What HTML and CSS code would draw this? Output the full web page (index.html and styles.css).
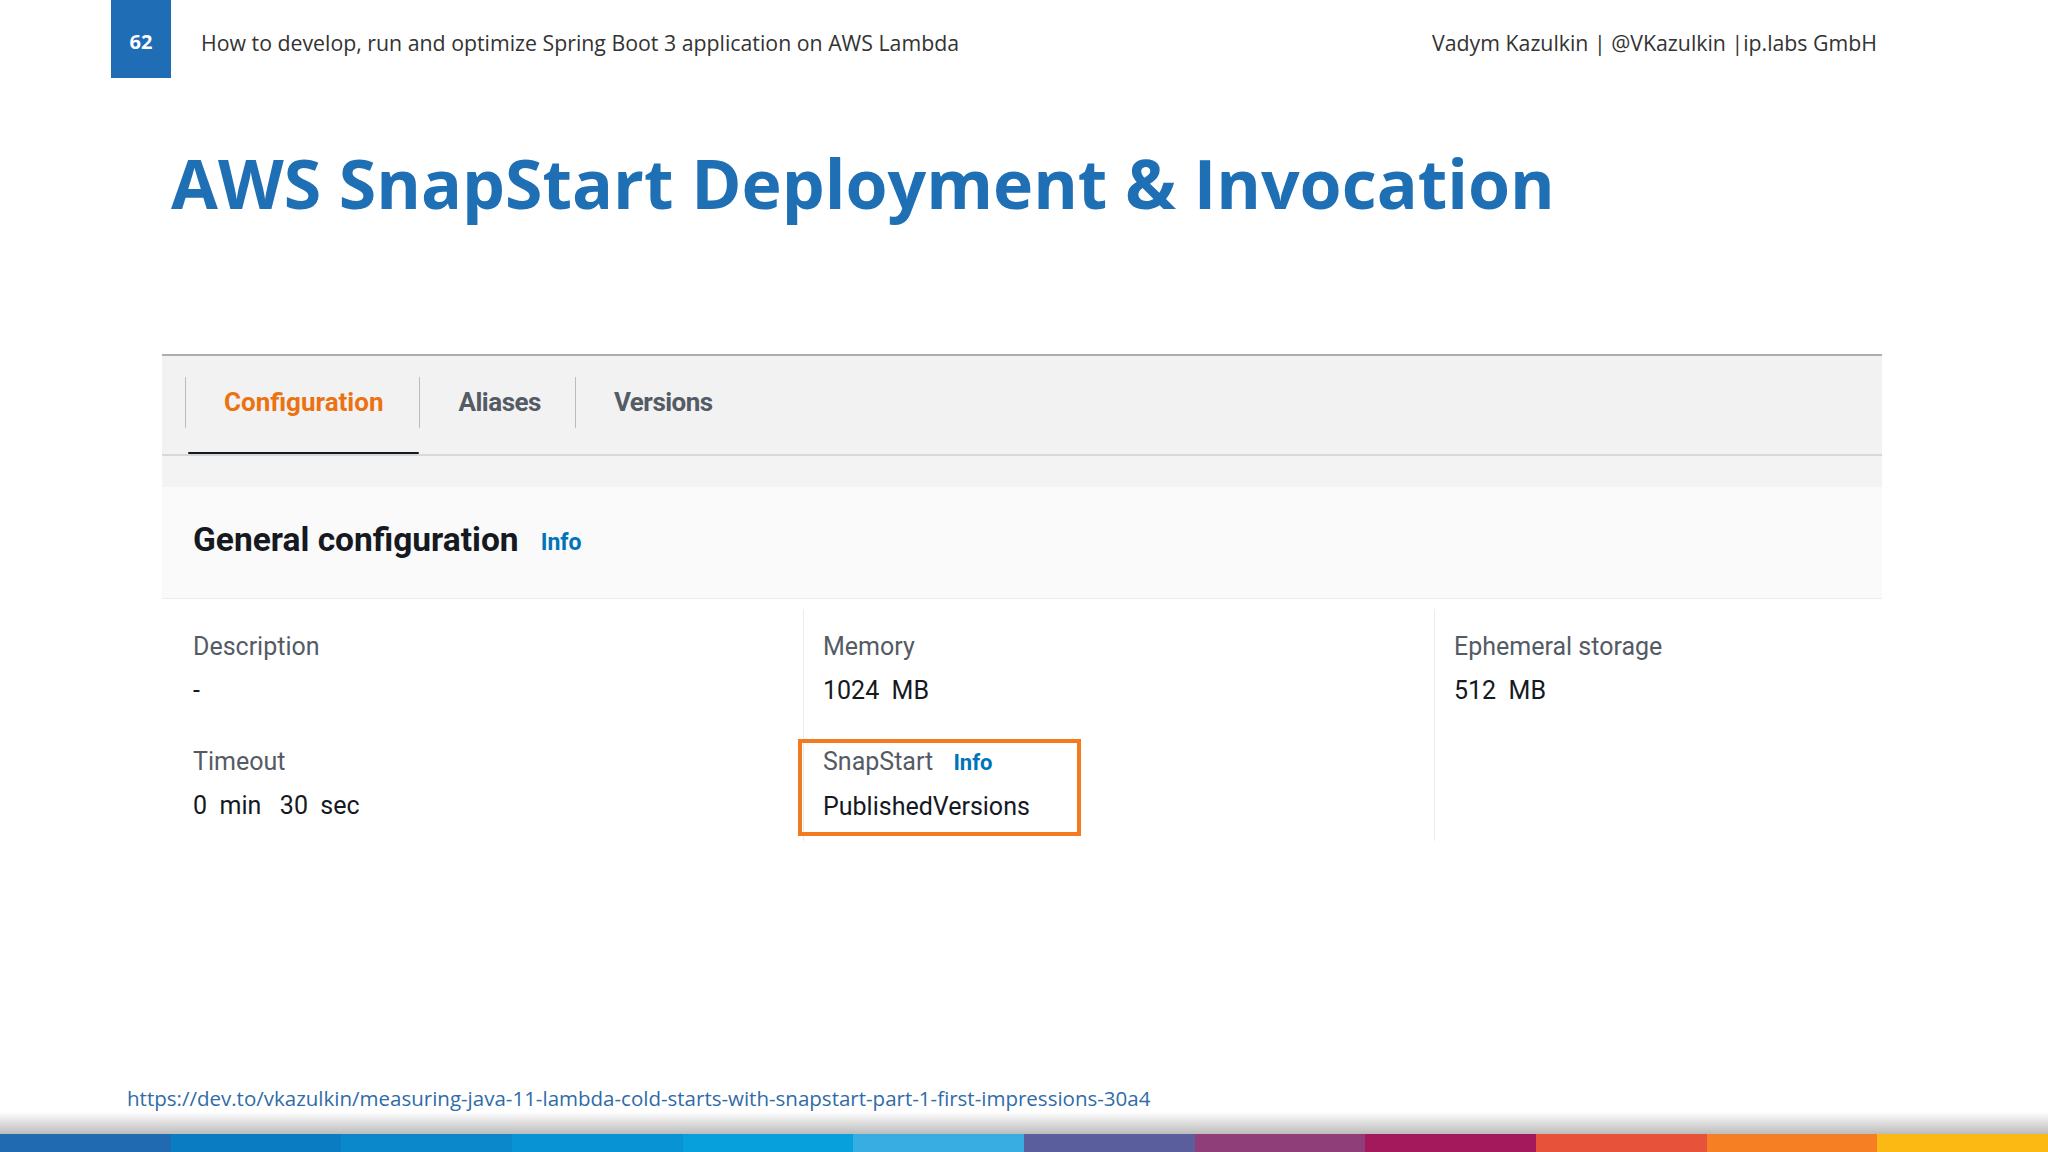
FILE: index.html
```html
<!DOCTYPE html>
<html lang="en">

<head>
    <meta charset="UTF-8">
    <title>AWS SnapStart Deployment &amp; Invocation</title>
    <link rel="stylesheet" href="styles.css">
</head>

<body>

    <div class="slide-header">
        <div class="slide-num">62</div>
        <div class="slide-topic">How to develop, run and optimize Spring Boot 3 application on AWS Lambda</div>
        <div class="slide-author">Vadym Kazulkin | @VKazulkin |ip.labs GmbH</div>
    </div>

    <h1 class="slide-title">AWS SnapStart Deployment &amp; Invocation</h1>

    <div class="console">

        <div class="tabbar">
            <div class="tab active"><span class="tab-label">Configuration</span></div>
            <div class="tab"><span class="tab-label">Aliases</span></div>
            <div class="tab"><span class="tab-label">Versions</span></div>
        </div>

        <div class="tab-gap"></div>

        <div class="section-head">
            <h2>General configuration</h2>
            <a class="info">Info</a>
        </div>

        <div class="section-body">
            <div class="col first">
                <div class="field">
                    <div class="label">Description</div>
                    <div class="value">-</div>
                </div>
                <div class="field next">
                    <div class="label">Timeout</div>
                    <div class="value">0&nbsp; min &nbsp; 30&nbsp; sec</div>
                </div>
            </div>
            <div class="col">
                <div class="field">
                    <div class="label">Memory</div>
                    <div class="value">1024&nbsp; MB</div>
                </div>
                <div class="field next marked">
                    <div class="label">SnapStart <a class="info small">Info</a></div>
                    <div class="value">PublishedVersions</div>
                </div>
            </div>
            <div class="col">
                <div class="field">
                    <div class="label">Ephemeral storage</div>
                    <div class="value">512&nbsp; MB</div>
                </div>
            </div>
        </div>

    </div>

    <div class="slide-footer">
        <div class="source">https://dev.to/vkazulkin/measuring-java-11-lambda-cold-starts-with-snapstart-part-1-first-impressions-30a4</div>
        <div class="shadow"></div>
        <div class="colorbar">
            <span class="c1"></span><span class="c2"></span><span class="c3"></span><span class="c4"></span>
            <span class="c5"></span><span class="c6"></span><span class="c7"></span><span class="c8"></span>
            <span class="c9"></span><span class="c10"></span><span class="c11"></span><span class="c12"></span>
        </div>
    </div>

</body>

</html>
```

FILE: styles.css
```css
body {
    margin: 0px;
    width: 2048px;
    height: 1152px;
    background: #ffffff;
    font-family: "Open Sans", Arial, sans-serif;
    display: flex;
    flex-direction: column;
    overflow: hidden;
}

/* slide header */
.slide-header {
    display: flex;
    align-items: center;
    height: 78px;
    padding-left: 111px;
    padding-right: 171px;
}

.slide-num {
    width: 60px;
    height: 78px;
    background: #1f6db5;
    color: white;
    font-weight: bold;
    font-size: 20px;
    display: flex;
    align-items: center;
    justify-content: center;
    padding-top: 4px;
    box-sizing: border-box;
}

.slide-topic {
    margin-left: 30px;
    font-size: 21.3px;
    color: #333333;
    padding-top: 6px;
}

.slide-author {
    margin-left: auto;
    font-size: 21.3px;
    color: #333333;
    padding-top: 6px;
}

.slide-title {
    margin: 66px 0px 0px 171px;
    font-size: 68px;
    line-height: 78px;
    font-weight: bold;
    color: #1f6fb5;
}

/* the console screenshot */
.console {
    margin: 132px 0px 0px 162px;
    width: 1720px;
    font-family: Roboto, "Open Sans", sans-serif;
}

.tabbar {
    display: flex;
    height: 102px;
    box-sizing: border-box;
    background: #f2f2f2;
    border-top: 2px solid #a9afb1;
    border-bottom: 2px solid #d6d9da;
    padding: 21px 0px 0px 23px;
}

.tab {
    display: flex;
    flex-direction: column;
}

.tab-label {
    border-left: 1px solid #b9bdbf;
    height: 51px;
    line-height: 51px;
    padding: 0px 36px 0px 38px;
    font-size: 26px;
    font-weight: bold;
    color: #545b64;
}

.tab + .tab .tab-label {
    letter-spacing: -0.5px;
    padding-right: 34px;
}

.tab.active .tab-label {
    color: #ec7211;
}

.tab.active::after {
    content: "";
    height: 5px;
    margin: 24px 0px 0px 3px;
    background: #16191f;
    border-radius: 2px;
}

.tab-gap {
    height: 31px;
    background: #f3f3f3;
}

.section-head {
    display: flex;
    align-items: center;
    height: 112px;
    box-sizing: border-box;
    padding: 0px 0px 6px 31px;
    background: #fafafa;
    border-bottom: 1px solid #eaeded;
}

.section-head h2 {
    margin: 0px;
    font-size: 33.5px;
    font-weight: bold;
    color: #16191f;
}

.info {
    color: #0073bb;
    font-weight: bold;
    font-size: 23px;
    margin-left: 22px;
    padding-top: 5px;
}

.info.small {
    font-size: 22px;
    margin-left: 14px;
}

.section-body {
    display: grid;
    grid-template-columns: 641px 631px 1fr;
    padding-top: 10px;
}

.col {
    border-left: 1px solid #eaeded;
    padding: 23px 0px 0px 19px;
    height: 209px;
}

.col.first {
    border-left: none;
    padding-left: 31px;
}

.label {
    font-size: 25px;
    line-height: 30px;
    color: #545b64;
}

.value {
    font-size: 25px;
    line-height: 30px;
    margin-top: 14px;
    color: #16191f;
}

.field.next {
    margin-top: 41px;
}

.field.marked {
    position: relative;
    margin: 33px 0px 0px -25px;
    width: 283px;
    box-sizing: border-box;
    border: 4px solid #f47a20;
    padding: 4px 0px 10px 21px;
}

/* footer */
.slide-footer {
    margin-top: auto;
}

.source {
    padding-left: 127px;
    font-size: 20.5px;
    line-height: 28px;
    color: #2f6ba8;
}

.shadow {
    height: 22px;
    background: linear-gradient(to bottom, #ffffff, #bcbcbc);
}

.colorbar {
    display: flex;
    height: 18px;
}

.colorbar span {
    flex: 1;
}

.c1 { background: #1f6ab0; }
.c2 { background: #0a7dc2; }
.c3 { background: #0a88cb; }
.c4 { background: #0894d4; }
.c5 { background: #08a0dc; }
.c6 { background: #38ade2; }
.c7 { background: #5a5e9c; }
.c8 { background: #8f3e7a; }
.c9 { background: #a3195b; }
.c10 { background: #e6533a; }
.c11 { background: #f57f22; }
.c12 { background: #fdb913; }
```
